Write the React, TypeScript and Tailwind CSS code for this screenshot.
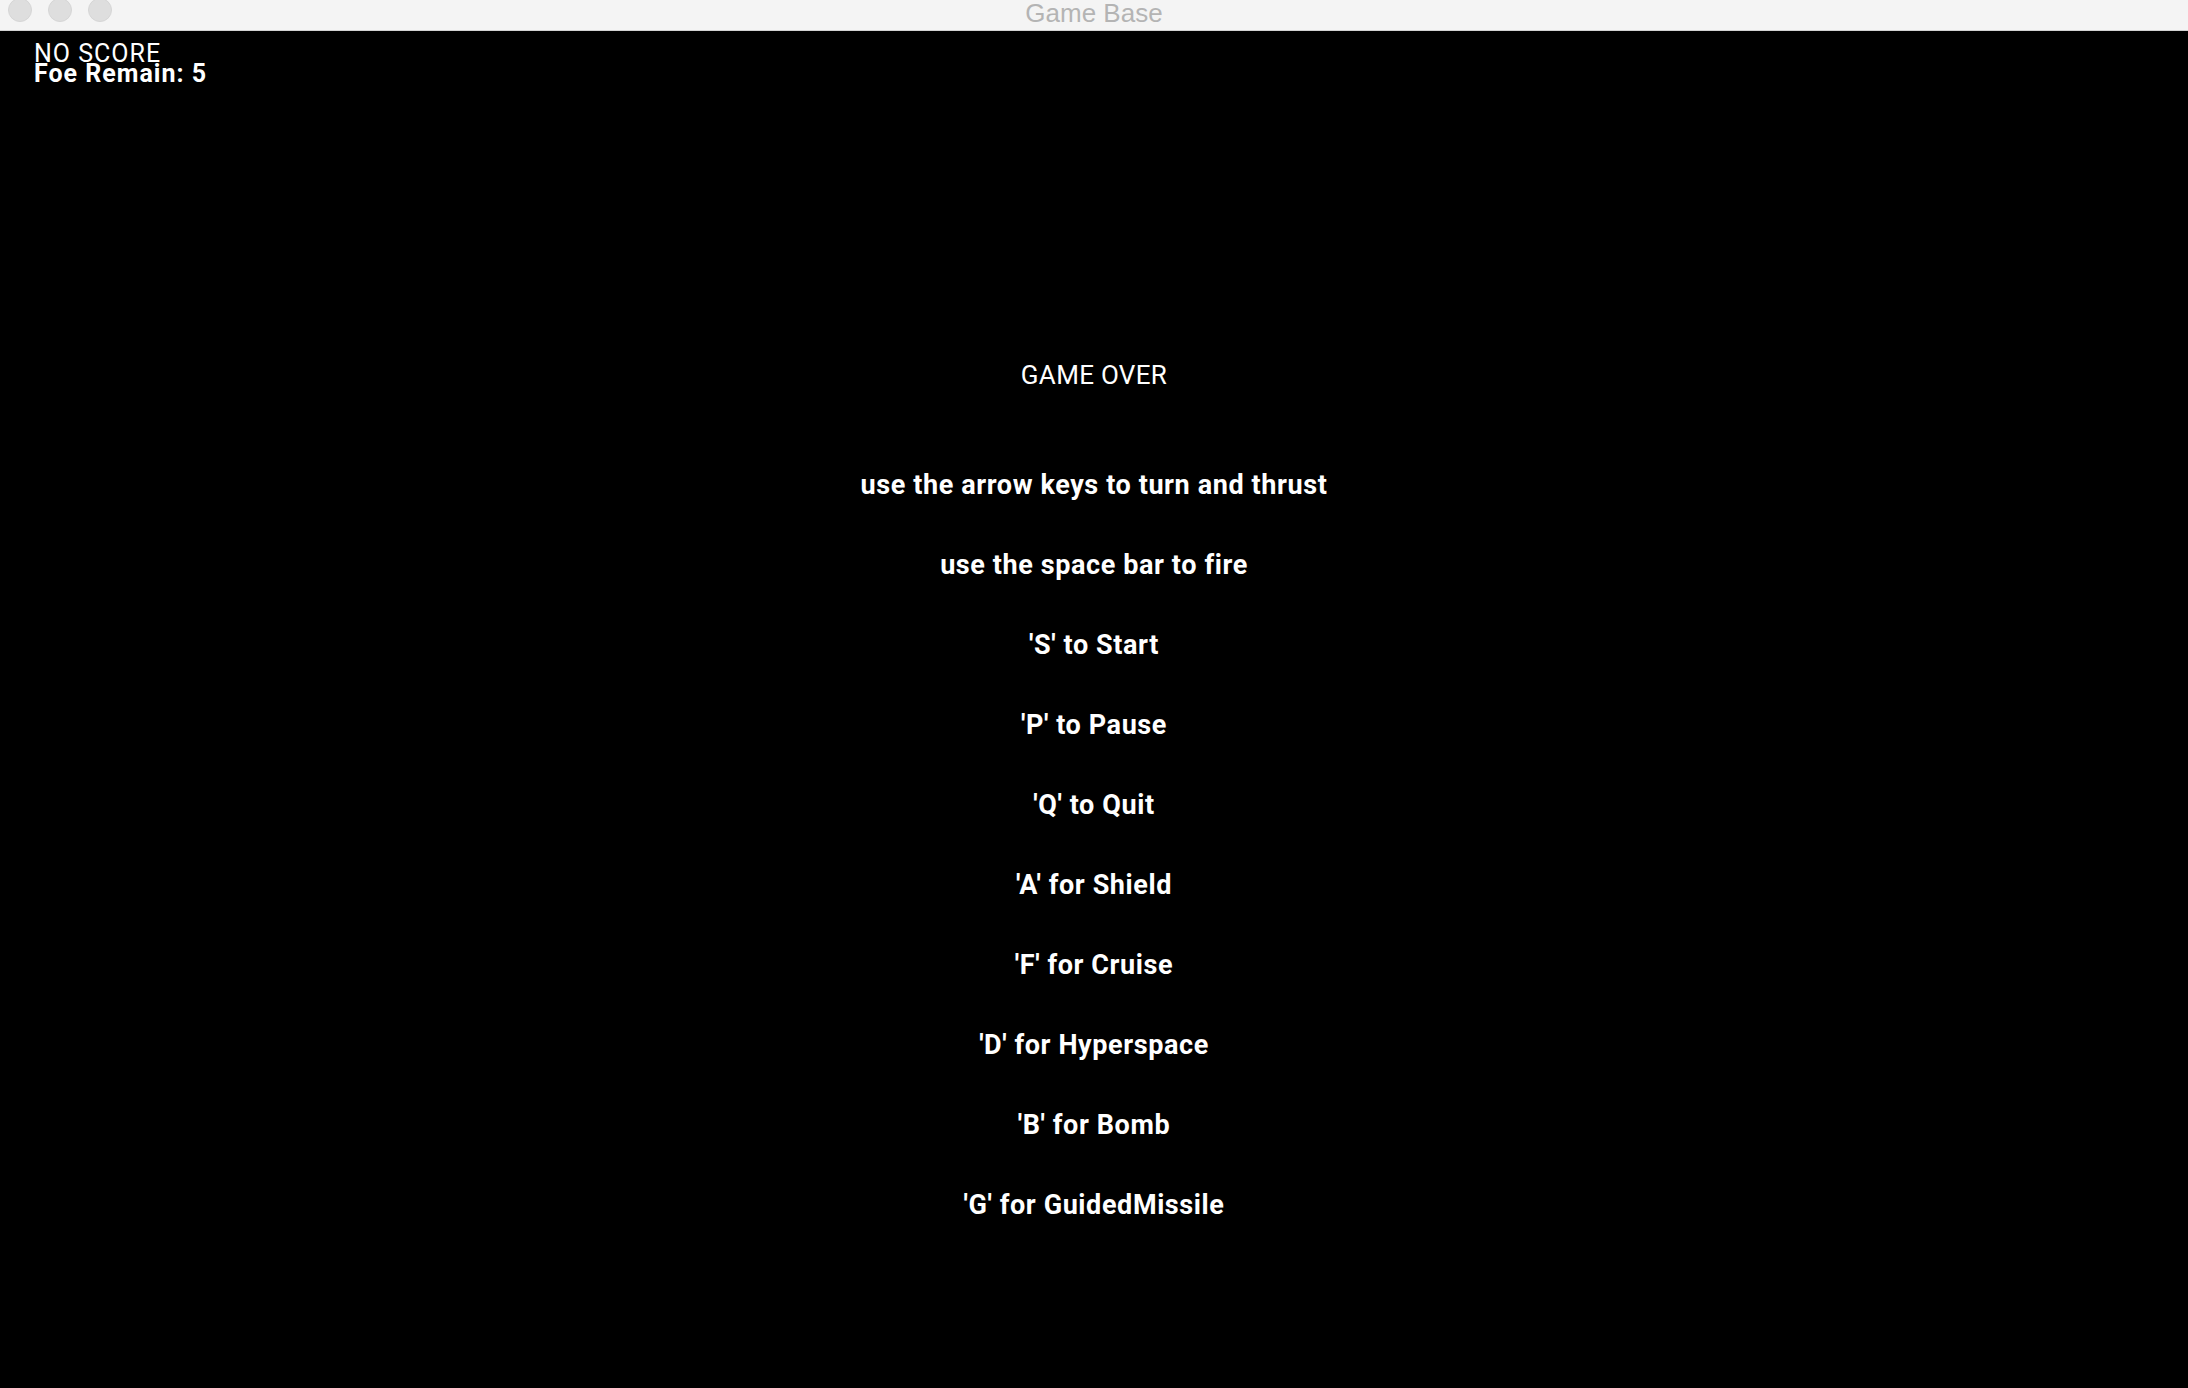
const lines = [
  'use the arrow keys to turn and thrust',
  'use the space bar to fire',
  "'S' to Start",
  "'P' to Pause",
  "'Q' to Quit",
  "'A' for Shield",
  "'F' for Cruise",
  "'D' for Hyperspace",
  "'B' for Bomb",
  "'G' for GuidedMissile",
]

const TitleBar = () => (
  <div className="relative flex h-[31px] items-start justify-center border-b border-[#d2d2d2] bg-[#f4f4f4]">
    <div className="absolute left-[8px] top-[-2px] flex gap-[16px]">
      <span className="h-[24px] w-[24px] rounded-full border border-[#d6d6d6] bg-[#dedede]" />
      <span className="h-[24px] w-[24px] rounded-full border border-[#d6d6d6] bg-[#dedede]" />
      <span className="h-[24px] w-[24px] rounded-full border border-[#d6d6d6] bg-[#dedede]" />
    </div>
    <span className="font-['Liberation_Sans',sans-serif] text-[26px] leading-[27px] text-[#b4b4b4]">Game Base</span>
  </div>
)

export default function App() {
  return (
    <div className="flex h-[1388px] w-[2188px] flex-col overflow-hidden bg-black">
      <TitleBar />
      <div className="flex flex-1 flex-col font-['Roboto',sans-serif] text-white">
        <div className="px-[34px] pt-[13px] leading-[20px]">
          <div className="text-[25px] tracking-[1px]">NO SCORE</div>
          <div className="text-[25px] font-bold tracking-[1px]">Foe Remain: 5</div>
        </div>
        <div className="mt-[251px] flex flex-col items-center">
          <div className="flex h-[80px] items-center text-[26px] tracking-[0.3px]">GAME OVER</div>
          <div className="mt-[30px] flex flex-col items-center">
            {lines.map((t) => (
              <div key={t} className="flex h-[80px] items-center text-[27px] font-bold tracking-[0.6px]">
                {t}
              </div>
            ))}
          </div>
        </div>
      </div>
    </div>
  )
}
